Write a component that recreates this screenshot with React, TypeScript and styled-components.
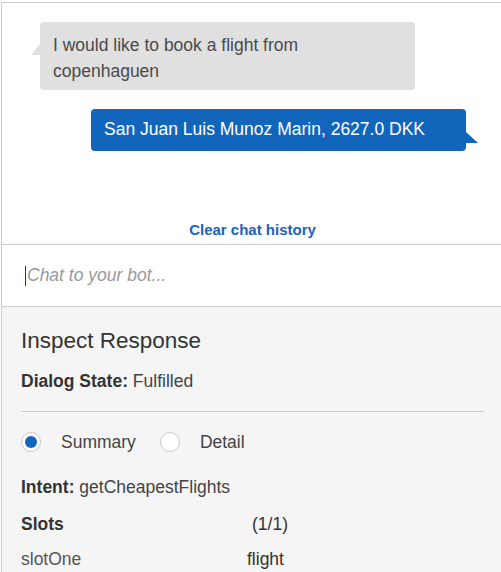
import React from "react";
import styled, { createGlobalStyle } from "styled-components";

const GlobalStyle = createGlobalStyle`
  html, body {
    margin: 0;
    padding: 0;
    background: #ffffff;
    font-family: "Liberation Sans", Arial, sans-serif;
  }
`;

const Frame = styled.div`
  margin: 2px 0 0 1px;
  width: 499px;
  height: 569px;
  border-top: 1px solid #cccccc;
  border-left: 1px solid #cccccc;
  display: flex;
  flex-direction: column;
  overflow: hidden;
`;

const ChatArea = styled.div`
  height: 242px;
  display: flex;
  flex-direction: column;
  border-bottom: 1px solid #cccccc;
  box-sizing: border-box;
`;

const Messages = styled.div`
  display: flex;
  flex-direction: column;
  gap: 19px;
  padding-top: 19px;
`;

const Bubble = styled.div<{ $mine?: boolean }>`
  position: relative;
  width: 375px;
  box-sizing: border-box;
  border-radius: 4px;
  font-size: 17.5px;
  line-height: ${p => (p.$mine ? "24px" : "26px")};
  padding: ${p => (p.$mine ? "8px 13px 10px" : "10px 13px 6px")};
  background: ${p => (p.$mine ? "#1166bb" : "#e0e0e0")};
  color: ${p => (p.$mine ? "#ffffff" : "#4a4a4a")};
  align-self: ${p => (p.$mine ? "flex-end" : "flex-start")};
  margin: ${p => (p.$mine ? "0 35px 0 0" : "0 0 0 38px")};

  &::after {
    content: "";
    position: absolute;
    width: 0;
    height: 0;
    border-bottom: 11px solid ${p => (p.$mine ? "#1166bb" : "#e0e0e0")};
    ${p =>
      p.$mine
        ? `right: -12px; top: 23px; border-right: 12px solid transparent;`
        : `left: -9px; top: 22px; border-left: 9px solid transparent;`}
  }
`;

const ClearLink = styled.a`
  margin-top: auto;
  align-self: center;
  margin-left: 2px;
  padding-bottom: 6px;
  font-size: 15px;
  line-height: 17px;
  font-weight: bold;
  color: #1a62c0;
  cursor: pointer;
`;

const InputRow = styled.div`
  height: 62px;
  border-bottom: 1px solid #cccccc;
  box-sizing: border-box;
  display: flex;
  align-items: center;
  padding-left: 23px;
`;

const Cursor = styled.span`
  width: 1px;
  height: 20px;
  background: #333333;
  margin-right: 1px;
`;

const Placeholder = styled.span`
  font-size: 17.5px;
  font-style: italic;
  color: #999999;
`;

const Panel = styled.div`
  flex: 1;
  background: #f5f5f5;
  padding: 21px 17px 0 19px;
  color: #333333;
`;

const Title = styled.div`
  font-size: 22.5px;
  line-height: 26px;
  color: #333333;
  margin-bottom: 15px;
`;

const Line = styled.div<{ $gap?: number }>`
  font-size: 17.5px;
  line-height: 24px;
  color: #444444;
  margin-top: ${p => p.$gap ?? 0}px;
`;

const Label = styled.b`
  color: #333333;
`;

const Rule = styled.div`
  margin-top: 18px;
  border-top: 1px solid #cccccc;
`;

const RadioGroup = styled.div`
  display: flex;
  align-items: center;
  margin-top: 18px;
  height: 24px;
`;

const RadioItem = styled.label`
  display: flex;
  align-items: center;
  gap: 20px;
  margin-right: 24px;
  font-size: 17.5px;
  color: #444444;
`;

const RadioCircle = styled.span<{ $checked?: boolean }>`
  width: 20px;
  height: 20px;
  box-sizing: border-box;
  border-radius: 50%;
  border: 1px solid #c8c8c8;
  background: #ffffff;
  display: flex;
  align-items: center;
  justify-content: center;

  &::after {
    content: "";
    width: 12px;
    height: 12px;
    border-radius: 50%;
    background: ${p => (p.$checked ? "#1166bb" : "transparent")};
  }
`;

const SlotRow = styled.div<{ $gap: number }>`
  display: grid;
  grid-template-columns: 226px 1fr;
  font-size: 17.5px;
  line-height: 24px;
  margin-top: ${p => p.$gap}px;
`;

const SlotCell = styled.span<{ $tone?: string; $indent?: number; $bold?: boolean }>`
  color: ${p => p.$tone ?? "#333333"};
  padding-left: ${p => p.$indent ?? 0}px;
  font-weight: ${p => (p.$bold ? "bold" : "normal")};
`;

export default function App() {
  return (
    <>
      <GlobalStyle />
      <Frame>
        <ChatArea>
          <Messages>
            <Bubble>I would like to book a flight from copenhaguen</Bubble>
            <Bubble $mine>San Juan Luis Munoz Marin, 2627.0 DKK</Bubble>
          </Messages>
          <ClearLink>Clear chat history</ClearLink>
        </ChatArea>
        <InputRow>
          <Cursor />
          <Placeholder>Chat to your bot...</Placeholder>
        </InputRow>
        <Panel>
          <Title>Inspect Response</Title>
          <Line>
            <Label>Dialog State:</Label> Fulfilled
          </Line>
          <Rule />
          <RadioGroup>
            <RadioItem>
              <RadioCircle $checked />
              Summary
            </RadioItem>
            <RadioItem>
              <RadioCircle />
              Detail
            </RadioItem>
          </RadioGroup>
          <Line $gap={21}>
            <Label>Intent:</Label> getCheapestFlights
          </Line>
          <SlotRow $gap={13}>
            <SlotCell $bold>Slots</SlotCell>
            <SlotCell $indent={5}>(1/1)</SlotCell>
          </SlotRow>
          <SlotRow $gap={11}>
            <SlotCell $tone="#555555">slotOne</SlotCell>
            <SlotCell>flight</SlotCell>
          </SlotRow>
        </Panel>
      </Frame>
    </>
  );
}
